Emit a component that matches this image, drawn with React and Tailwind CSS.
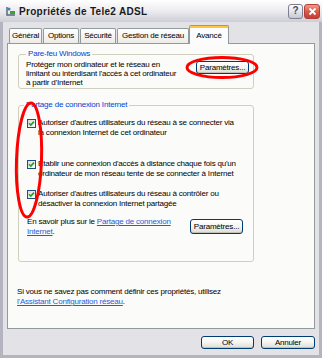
import React from 'react';

const XpButton = ({ children, className = '' }) => (
  <button
    className={`h-[13px] rounded-[3px] border border-[#003c74] bg-gradient-to-b from-white via-[#f4f4f0] to-[#dcdcd4] text-[8px] leading-none tracking-[-0.2px] text-black shadow-[inset_0_-1px_0_#c2c2b8] ${className}`}
  >
    {children}
  </button>
);

const Check = () => (
  <span className="mt-[1px] flex h-[9px] w-[9px] shrink-0 items-center justify-center border border-[#1c5180] bg-gradient-to-br from-[#dcdcd6] to-white">
    <svg width="7" height="7" viewBox="0 0 7 7">
      <path d="M1 3.2 L2.8 5 L6 1.6" fill="none" stroke="#21a121" strokeWidth="1.6" />
    </svg>
  </span>
);

const Tab = ({ label, active, className = '' }) =>
  active ? (
    <div
      className={`relative z-10 -mb-[1px] flex h-[19px] items-center justify-center rounded-t-[2px] border border-b-0 border-[#919b9c] bg-[#fcfcfe] pt-[1px] shadow-[inset_0_2px_0_#ffc83c] ${className}`}
    >
      {label}
    </div>
  ) : (
    <div
      className={`flex h-[15px] items-center justify-center rounded-t-[2px] border border-b-0 border-[#919b9c] bg-gradient-to-b from-white to-[#ecebe6] ${className}`}
    >
      {label}
    </div>
  );

export default function App() {
  return (
    <div className="relative flex h-[358px] w-[322px] flex-col overflow-hidden bg-[#e3e3e7] font-['Liberation_Sans',Arial,sans-serif] text-[8px] tracking-[-0.2px] text-black">
      {/* title bar */}
      <div className="flex h-[22px] shrink-0 items-center bg-gradient-to-b from-white via-[#ececf0] to-[#cdcdd6] pl-[5px] pr-[2px]">
        <svg width="12" height="12" viewBox="0 0 12 12" className="mr-[2px]">
          <path d="M2 2 L2 10 L10 10" fill="none" stroke="#5a6a7a" strokeWidth="1.5" />
          <rect x="5" y="6" width="5" height="3" fill="#3aa03a" />
          <circle cx="4" cy="4" r="1.5" fill="#4a7ac0" />
        </svg>
        <span className="flex-1 text-[10px] font-bold tracking-[0.3px] text-[#1a1a1a]">Propriétés de Tele2 ADSL</span>
        <div className="flex gap-[1px]">
          <div className="flex h-[15px] w-[15px] items-center justify-center rounded-[3px] border border-[#7f7f90] bg-gradient-to-b from-white to-[#c8c8d4] text-[10px] font-bold leading-none text-[#4a4a5a]">
            ?
          </div>
          <div className="flex h-[15px] w-[16px] items-center justify-center rounded-[3px] border border-[#b04040] bg-gradient-to-b from-[#ef9a88] via-[#dc5a48] to-[#c43c30]">
            <svg width="9" height="9" viewBox="0 0 9 9">
              <path d="M1.5 1.5 L7.5 7.5 M7.5 1.5 L1.5 7.5" stroke="white" strokeWidth="1.8" />
            </svg>
          </div>
        </div>
      </div>

      {/* body */}
      <div className="flex flex-1 flex-col border-x-[3px] border-b-[3px] border-[#b4b4c0] px-[4px] pt-[3px]">
        <div className="flex items-end pl-[2px]">
          <Tab label="Général" className="mr-[1px] w-[33px]" />
          <Tab label="Options" className="mr-[1px] w-[36px]" />
          <Tab label="Sécurité" className="mr-[1px] w-[36px]" />
          <Tab label="Gestion de réseau" className="w-[72px]" />
          <Tab label="Avancé" active className="w-[40px]" />
        </div>

        <div className="flex h-[286px] flex-col border border-[#919b9c] bg-[#fbfbf9]">
          <fieldset className="ml-[10px] mt-[5px] w-[236px] rounded-[3px] border border-[#d0d0bf] px-[7px] pb-[1px]">
            <legend className="px-[2px] leading-[10px] text-[#0046d5]">Pare-feu Windows</legend>
            <div className="flex items-start justify-between pt-[1px]">
              <p className="whitespace-nowrap leading-[9px]">
                Protéger mon ordinateur et le réseau en
                <br />
                limitant ou interdisant l'accès à cet ordinateur
                <br />
                à partir d'Internet
              </p>
              <XpButton className="mr-[-3px] mt-[1px] w-[53px]">Paramètres...</XpButton>
            </div>
          </fieldset>

          <fieldset className="ml-[10px] mt-[11px] w-[236px] rounded-[3px] border border-[#d0d0bf] pb-[24px] pl-[8px] pr-[7px]">
            <legend className="-ml-[3px] px-[2px] leading-[10px] text-[#0046d5]">Partage de connexion Internet</legend>
            <div className="flex flex-col pt-[8px] leading-[10px]">
              <div className="flex gap-[2px]">
                <Check />
                <p className="whitespace-nowrap">
                  Autoriser d'autres utilisateurs du réseau à se connecter via
                  <br />
                  la connexion Internet de cet ordinateur
                </p>
              </div>
              <div className="mt-[21px] flex gap-[2px]">
                <Check />
                <p className="whitespace-nowrap">
                  Établir une connexion d'accès à distance chaque fois qu'un
                  <br />
                  ordinateur de mon réseau tente de se connecter à Internet
                </p>
              </div>
              <div className="mt-[10px] flex gap-[2px]">
                <Check />
                <p className="whitespace-nowrap">
                  Autoriser d'autres utilisateurs du réseau à contrôler ou
                  <br />
                  désactiver la connexion Internet partagée
                </p>
              </div>
              <div className="mt-[8px] flex items-start justify-between">
                <p className="whitespace-nowrap">
                  En savoir plus sur le <span className="text-[#2a5bd7] underline">Partage de connexion</span>
                  <br />
                  <span className="text-[#2a5bd7] underline">Internet</span>.
                </p>
                <XpButton className="mr-[3px] mt-[2px] h-[15px] w-[53px]">Paramètres...</XpButton>
              </div>
            </div>
          </fieldset>

          <p className="ml-[9px] mt-[25px] leading-[10px]">
            Si vous ne savez pas comment définir ces propriétés, utilisez
            <br />
            <span className="text-[#2a5bd7] underline">l'Assistant Configuration réseau</span>.
          </p>
        </div>

        <div className="mt-[7px] flex justify-end gap-[7px]">
          <XpButton className="w-[53px]">OK</XpButton>
          <XpButton className="w-[54px]">Annuler</XpButton>
        </div>
      </div>

      {/* red annotation marks */}
      <svg className="pointer-events-none absolute left-0 top-0" width="322" height="358">
        <ellipse cx="222" cy="67.5" rx="35" ry="10" fill="none" stroke="#ff0000" strokeWidth="3" />
        <ellipse cx="29" cy="160" rx="12.5" ry="57" fill="none" stroke="#ff0000" strokeWidth="3" transform="rotate(2 29 160)" />
      </svg>
    </div>
  );
}
